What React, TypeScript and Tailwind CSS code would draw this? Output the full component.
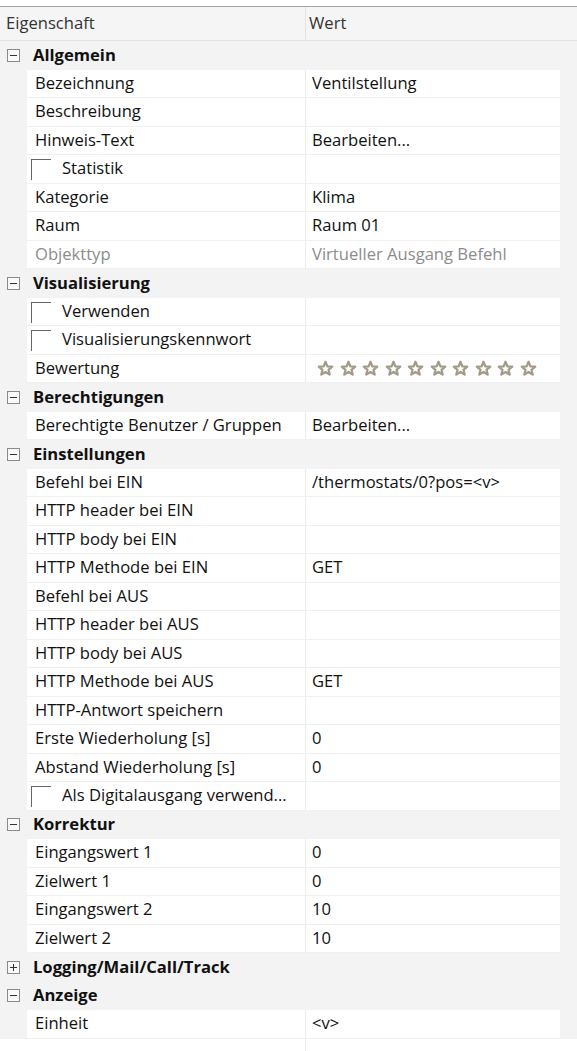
import React from "react";

type Row =
  | { kind: "cat"; label: string; open: boolean }
  | { kind: "prop"; name: string; value?: string; check?: boolean; muted?: boolean; stars?: boolean };

const rows: Row[] = [
  { kind: "cat", label: "Allgemein", open: true },
  { kind: "prop", name: "Bezeichnung", value: "Ventilstellung" },
  { kind: "prop", name: "Beschreibung" },
  { kind: "prop", name: "Hinweis-Text", value: "Bearbeiten..." },
  { kind: "prop", name: "Statistik", check: true },
  { kind: "prop", name: "Kategorie", value: "Klima" },
  { kind: "prop", name: "Raum", value: "Raum 01" },
  { kind: "prop", name: "Objekttyp", value: "Virtueller Ausgang Befehl", muted: true },
  { kind: "cat", label: "Visualisierung", open: true },
  { kind: "prop", name: "Verwenden", check: true },
  { kind: "prop", name: "Visualisierungskennwort", check: true },
  { kind: "prop", name: "Bewertung", stars: true },
  { kind: "cat", label: "Berechtigungen", open: true },
  { kind: "prop", name: "Berechtigte Benutzer / Gruppen", value: "Bearbeiten..." },
  { kind: "cat", label: "Einstellungen", open: true },
  { kind: "prop", name: "Befehl bei EIN", value: "/thermostats/0?pos=<v>" },
  { kind: "prop", name: "HTTP header bei EIN" },
  { kind: "prop", name: "HTTP body bei EIN" },
  { kind: "prop", name: "HTTP Methode bei EIN", value: "GET" },
  { kind: "prop", name: "Befehl bei AUS" },
  { kind: "prop", name: "HTTP header bei AUS" },
  { kind: "prop", name: "HTTP body bei AUS" },
  { kind: "prop", name: "HTTP Methode bei AUS", value: "GET" },
  { kind: "prop", name: "HTTP-Antwort speichern" },
  { kind: "prop", name: "Erste Wiederholung [s]", value: "0" },
  { kind: "prop", name: "Abstand Wiederholung [s]", value: "0" },
  { kind: "prop", name: "Als Digitalausgang verwend...", check: true },
  { kind: "cat", label: "Korrektur", open: true },
  { kind: "prop", name: "Eingangswert 1", value: "0" },
  { kind: "prop", name: "Zielwert 1", value: "0" },
  { kind: "prop", name: "Eingangswert 2", value: "10" },
  { kind: "prop", name: "Zielwert 2", value: "10" },
  { kind: "cat", label: "Logging/Mail/Call/Track", open: false },
  { kind: "cat", label: "Anzeige", open: true },
  { kind: "prop", name: "Einheit", value: "<v>" },
];

function Expander({ open }: { open: boolean }) {
  return (
    <svg width="13" height="13" viewBox="0 0 13 13" className="shrink-0">
      <rect x="0.5" y="0.5" width="12" height="12" fill="#fafafa" stroke="#8a8a8a" />
      <line x1="3" y1="6.5" x2="10" y2="6.5" stroke="#333" />
      {!open && <line x1="6.5" y1="3" x2="6.5" y2="10" stroke="#333" />}
    </svg>
  );
}

function Star() {
  return (
    <svg width="17" height="17" viewBox="0 0 24 24" className="shrink-0">
      <polygon
        points="12,2.5 14.6,8.9 21.5,9.4 16.2,13.8 17.9,20.6 12,16.9 6.1,20.6 7.8,13.8 2.5,9.4 9.4,8.9"
        fill="#ffffff"
        stroke="#a39b88"
        strokeWidth="3.2"
        strokeLinejoin="round"
      />
    </svg>
  );
}

export default function App() {
  return (
    <div className="w-[577px] h-[1051px] overflow-hidden bg-white font-['Open_Sans',sans-serif] text-[16.6px] text-[#111]">
      <div className="h-[6px]" />
      <div className="flex h-[35px] border-t border-[#a3a3a3] border-b border-b-[#e2e2e2] bg-[#f5f5f5] text-[#333]">
        <div className="w-[306px] pl-[6px] flex items-center border-r border-[#e2e2e2]">Eigenschaft</div>
        <div className="flex-1 pl-[3px] flex items-center">Wert</div>
      </div>
      {rows.map((r, i) =>
        r.kind === "cat" ? (
          <div key={i} className="flex items-center h-[28.5px] bg-[#f3f3f3]">
            <div className="w-[33px] pl-[7px] flex items-center">
              <Expander open={r.open} />
            </div>
            <span className="font-bold">{r.label}</span>
          </div>
        ) : (
          <div key={i} className="flex h-[28.5px] bg-[#f3f3f3]">
            <div className="w-[27px]" />
            <div className="flex w-[533px] bg-white border-b border-[#f0f0f0]">
              <div
                className={`w-[279px] flex items-center border-r border-[#ececec] whitespace-nowrap overflow-hidden ${
                  r.muted ? "text-[#8c8c8c]" : ""
                } ${r.check ? "pl-[4px]" : "pl-[8px]"}`}
              >
                {r.check && (
                  <span className="shrink-0 w-[20px] h-[21px] mr-[11px] border-t border-l border-[#666] self-center mt-[2px]" />
                )}
                {r.name}
              </div>
              <div className={`flex-1 pl-[6px] flex items-center whitespace-nowrap ${r.muted ? "text-[#8c8c8c]" : ""}`}>
                {r.stars ? (
                  <div className="flex gap-[5.5px] pl-[5px]">
                    {Array.from({ length: 10 }).map((_, k) => (
                      <Star key={k} />
                    ))}
                  </div>
                ) : (
                  r.value
                )}
              </div>
            </div>
          </div>
        )
      )}
      <div className="flex h-[20px]">
        <div className="w-[306px] border-r border-[#ececec]" />
      </div>
    </div>
  );
}
